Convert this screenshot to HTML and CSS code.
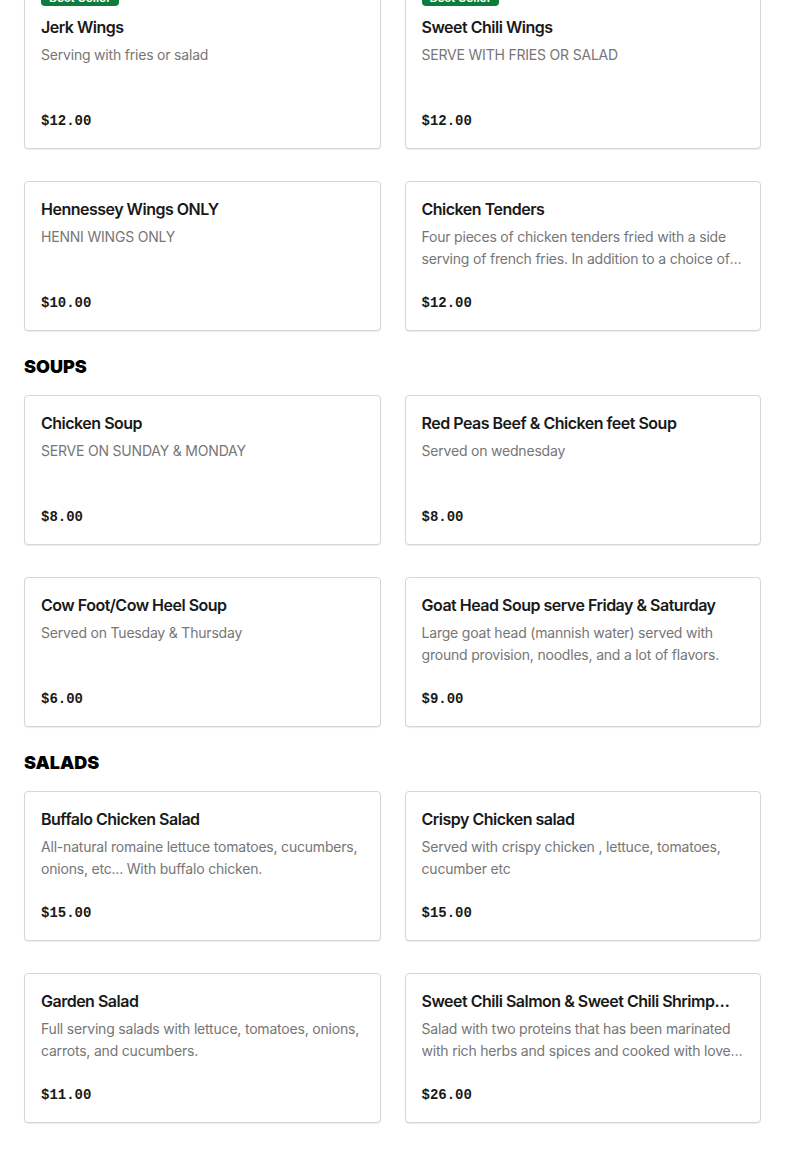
FILE: index.html
```html
<!DOCTYPE html>
<html lang="en">
<head>
<meta charset="utf-8">
<title>Menu</title>
<link rel="stylesheet" href="styles.css">
</head>
<body>
<main class="menu">
  <section class="category">
    <div class="grid">
      <article class="card">
        <span class="badge">Best Seller</span>
        <h3 class="title">Jerk Wings</h3>
        <p class="desc">Serving with fries or salad</p>
        <p class="price">$12.00</p>
      </article>
      <article class="card">
        <span class="badge">Best Seller</span>
        <h3 class="title">Sweet Chili Wings</h3>
        <p class="desc">SERVE WITH FRIES OR SALAD</p>
        <p class="price">$12.00</p>
      </article>
      <article class="card">
        <h3 class="title">Hennessey Wings ONLY</h3>
        <p class="desc">HENNI WINGS ONLY</p>
        <p class="price">$10.00</p>
      </article>
      <article class="card">
        <h3 class="title">Chicken Tenders</h3>
        <p class="desc">Four pieces of chicken tenders fried with a side serving of french fries. In addition to a choice of sauce on the side.</p>
        <p class="price">$12.00</p>
      </article>
    </div>
  </section>

  <section class="category">
    <h2 class="cat-title">SOUPS</h2>
    <div class="grid">
      <article class="card">
        <h3 class="title">Chicken Soup</h3>
        <p class="desc">SERVE ON SUNDAY &amp; MONDAY</p>
        <p class="price">$8.00</p>
      </article>
      <article class="card">
        <h3 class="title">Red Peas Beef &amp; Chicken feet Soup</h3>
        <p class="desc">Served on wednesday</p>
        <p class="price">$8.00</p>
      </article>
      <article class="card">
        <h3 class="title">Cow Foot/Cow Heel Soup</h3>
        <p class="desc">Served on Tuesday &amp; Thursday</p>
        <p class="price">$6.00</p>
      </article>
      <article class="card">
        <h3 class="title">Goat Head Soup serve Friday &amp; Saturday</h3>
        <p class="desc">Large goat head (mannish water) served with ground provision, noodles, and a lot of flavors.</p>
        <p class="price">$9.00</p>
      </article>
    </div>
  </section>

  <section class="category">
    <h2 class="cat-title">SALADS</h2>
    <div class="grid">
      <article class="card">
        <h3 class="title">Buffalo Chicken Salad</h3>
        <p class="desc">All-natural romaine lettuce tomatoes, cucumbers, onions, etc... With buffalo chicken.</p>
        <p class="price">$15.00</p>
      </article>
      <article class="card">
        <h3 class="title">Crispy Chicken salad</h3>
        <p class="desc">Served with crispy chicken , lettuce, tomatoes, cucumber etc</p>
        <p class="price">$15.00</p>
      </article>
      <article class="card">
        <h3 class="title">Garden Salad</h3>
        <p class="desc">Full serving salads with lettuce, tomatoes, onions, carrots, and cucumbers.</p>
        <p class="price">$11.00</p>
      </article>
      <article class="card">
        <h3 class="title">Sweet Chili Salmon &amp; Sweet Chili Shrimp Salad</h3>
        <p class="desc">Salad with two proteins that has been marinated with rich herbs and spices and cooked with love and served on a bed of fresh greens.</p>
        <p class="price">$26.00</p>
      </article>
      <article class="card">
        <h3 class="title">Caesar Salad</h3>
        <p class="desc">Romaine lettuce with caesar dressing.</p>
        <p class="price">$12.00</p>
      </article>
      <article class="card">
        <h3 class="title">Jerk Chicken Salad</h3>
        <p class="desc">Fresh greens topped with jerk chicken.</p>
        <p class="price">$15.00</p>
      </article>
    </div>
  </section>
</main>
</body>
</html>
```

FILE: styles.css
```css
* {
  box-sizing: border-box;
}

html, body {
  margin: 0;
  padding: 0;
  background: #ffffff;
}

body {
  font-family: Inter, "Noto Sans", "Liberation Sans", sans-serif;
  color: #191919;
}

.menu {
  padding: 0 24px;
  margin-top: -33px;
}

.category {
  display: flex;
  flex-direction: column;
}

.cat-title {
  margin: 24px 0 16px;
  font-size: 18px;
  line-height: 24px;
  font-weight: 900;
  color: #000000;
}

.grid {
  display: grid;
  grid-template-columns: 1fr 1fr;
  column-gap: 24px;
  row-gap: 32px;
}

.card {
  display: flex;
  flex-direction: column;
  align-items: flex-start;
  border: 1px solid #d6d6d6;
  border-radius: 4px;
  box-shadow: 0 1px 1px rgba(0, 0, 0, 0.08);
  padding: 16px;
  min-width: 0;
  background: #fff;
}

.badge {
  display: inline-block;
  height: 22px;
  padding: 5px 8px 0;
  line-height: 17px;
  border-radius: 4px;
  background: #0b7c3c;
  color: #fff;
  font-size: 12px;
  font-weight: 600;
  margin-bottom: 10px;
}

.title {
  margin: 0;
  width: 100%;
  padding-right: 12px;
  font-size: 16px;
  line-height: 22px;
  font-weight: 600;
  letter-spacing: -0.5px;
  color: #191919;
  white-space: nowrap;
  overflow: hidden;
  text-overflow: ellipsis;
}

.desc {
  margin: 6px 0 0;
  width: 100%;
  height: 44px;
  font-size: 14px;
  line-height: 22px;
  letter-spacing: -0.2px;
  color: #767676;
  display: -webkit-box;
  -webkit-line-clamp: 2;
  -webkit-box-orient: vertical;
  overflow: hidden;
}

.price {
  margin: 22px 0 0;
  font-family: "Liberation Mono", "DejaVu Sans Mono", monospace;
  font-weight: 700;
  font-size: 14px;
  line-height: 22px;
  color: #191919;
}
```
